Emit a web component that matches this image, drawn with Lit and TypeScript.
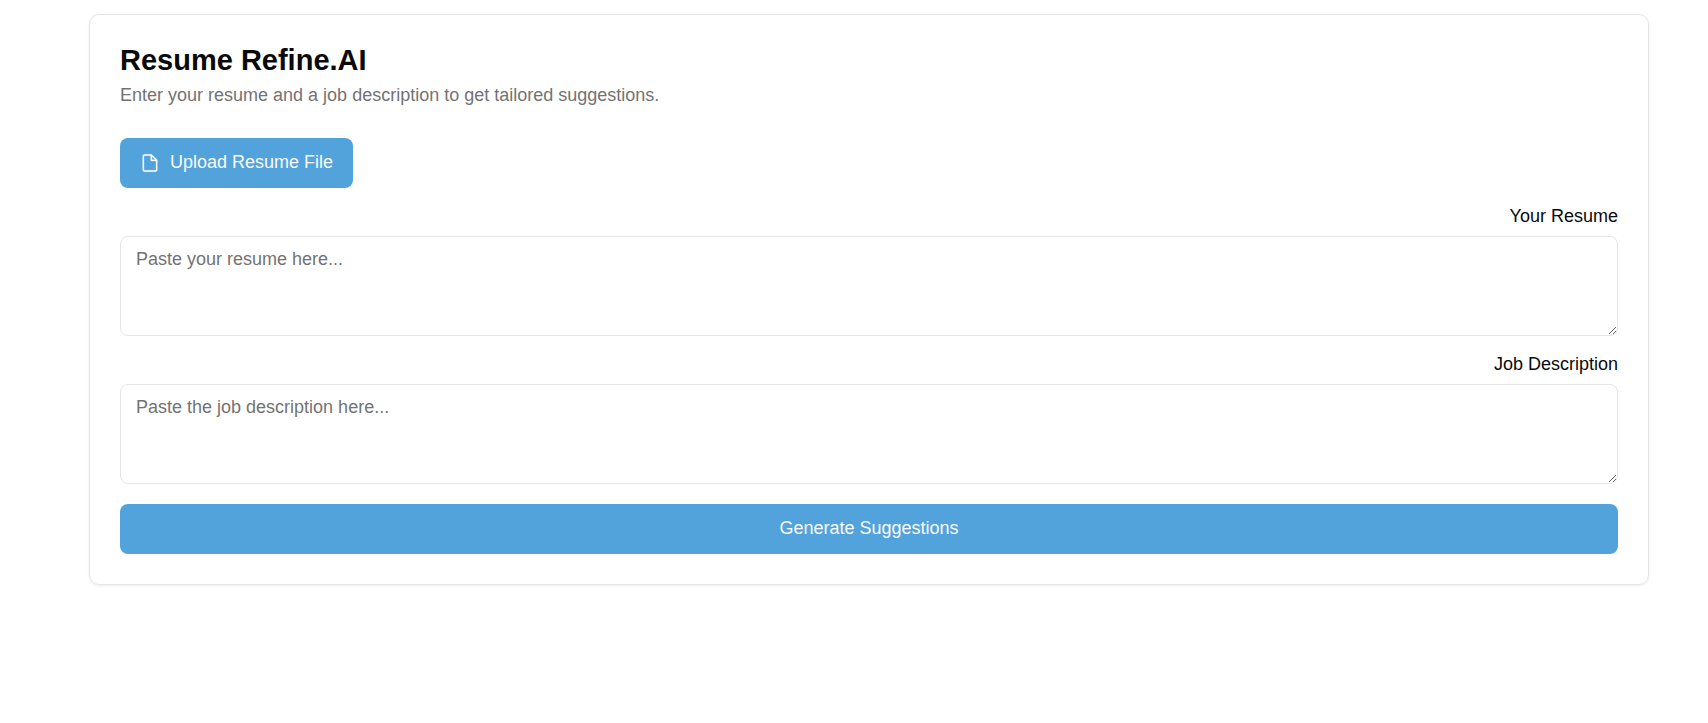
import { LitElement, html, css } from "lit";
import { customElement } from "lit/decorators.js";

@customElement("app-root")
export class AppRoot extends LitElement {
  static styles = css`
    :host {
      display: block;
      padding: 14px 59px 40px 89px;
      background: #fff;
      color: #0a0a0a;
      font-family: Arial, "Liberation Sans", sans-serif;
      font-size: 18px;
      line-height: 24px;
    }
    * {
      box-sizing: border-box;
    }
    .card {
      border: 1px solid #e5e5e5;
      border-radius: 10px;
      padding: 30px;
      box-shadow: 0 1px 3px rgba(0, 0, 0, 0.08);
    }
    .header {
      padding-bottom: 30px;
    }
    .title {
      margin: 0;
      font-size: 29px;
      line-height: 30px;
      font-weight: 700;
    }
    .intro {
      margin: 8px 0 0;
      line-height: 25px;
      color: #737373;
    }
    .form {
      display: flex;
      flex-direction: column;
      gap: 20px;
    }
    .button {
      display: flex;
      align-items: center;
      justify-content: center;
      gap: 10px;
      height: 50px;
      padding: 0 20px;
      border: 0;
      border-radius: 8px;
      background: #52a3dc;
      color: #fafafa;
      font: inherit;
      cursor: pointer;
    }
    .upload {
      align-self: flex-start;
    }
    .caption {
      padding-bottom: 2px;
    }
    .icon {
      width: 20px;
      height: 20px;
      fill: currentColor;
      stroke: currentColor;
      stroke-width: 0.2;
    }
    .field {
      display: flex;
      flex-direction: column;
    }
    .label {
      align-self: flex-end;
      line-height: 16px;
      margin-bottom: 12px;
    }
    .area {
      display: block;
      width: 100%;
      height: 100px;
      padding: 10px 15px;
      border: 1px solid #e5e5e5;
      border-radius: 8px;
      background: transparent;
      color: inherit;
      font: inherit;
      resize: vertical;
    }
    .area::placeholder {
      color: #737373;
    }
  `;

  render() {
    return html`
      <main class="card">
        <header class="header">
          <h1 class="title">Resume Refine.AI</h1>
          <p class="intro">Enter your resume and a job description to get tailored suggestions.</p>
        </header>
        <form class="form" @submit=${(e: Event) => e.preventDefault()}>
          <button class="button upload" type="button">
            <svg class="icon" viewBox="0 0 15 15" aria-hidden="true">
              <path
                fill-rule="evenodd"
                clip-rule="evenodd"
                d="M3.5 2C3.22386 2 3 2.22386 3 2.5V12.5C3 12.7761 3.22386 13 3.5 13H11.5C11.7761 13 12 12.7761 12 12.5V6H8.5C8.22386 6 8 5.77614 8 5.5V2H3.5ZM9 2.70711L11.2929 5H9V2.70711ZM2 2.5C2 1.67157 2.67157 1 3.5 1H8.5C8.63261 1 8.75979 1.05268 8.85355 1.14645L12.8536 5.14645C12.9473 5.24021 13 5.36739 13 5.5V12.5C13 13.3284 12.3284 14 11.5 14H3.5C2.67157 14 2 13.3284 2 12.5V2.5Z"
              />
            </svg>
            <span class="caption">Upload Resume File</span>
          </button>
          <div class="field">
            <label class="label" for="resume">Your Resume</label>
            <textarea class="area" id="resume" placeholder="Paste your resume here..."></textarea>
          </div>
          <div class="field">
            <label class="label" for="job">Job Description</label>
            <textarea class="area" id="job" placeholder="Paste the job description here..."></textarea>
          </div>
          <button class="button" type="submit">
            <span class="caption">Generate Suggestions</span>
          </button>
        </form>
      </main>
    `;
  }
}
